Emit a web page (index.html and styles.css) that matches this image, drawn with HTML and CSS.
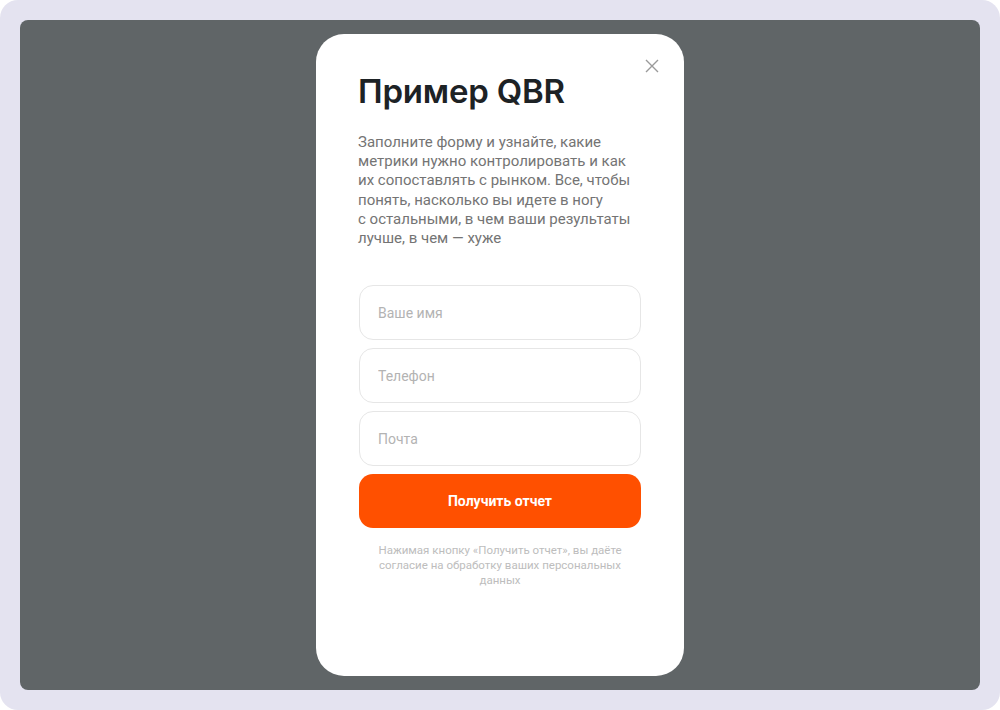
FILE: index.html
```html
<!DOCTYPE html>
<html lang="ru">
<head>
<meta charset="utf-8">
<link rel="stylesheet" href="styles.css">
</head>
<body>
<div class="frame">
  <div class="overlay">
    <div class="modal">
      <button class="close" aria-label="Закрыть">
        <svg width="14" height="14" viewBox="0 0 14 14"><path d="M1 1L13 13M13 1L1 13" stroke="#9a9a9a" stroke-width="1.4" fill="none"/></svg>
      </button>
      <h1 class="title">Пример QBR</h1>
      <p class="lead">Заполните форму и узнайте, какие метрики нужно контролировать и как их сопоставлять с рынком. Все, чтобы понять, насколько вы идете в ногу<br>с остальными, в чем ваши результаты лучше, в чем — хуже</p>
      <form class="form">
        <input class="field" type="text" placeholder="Ваше имя">
        <input class="field" type="tel" placeholder="Телефон">
        <input class="field" type="email" placeholder="Почта">
        <button class="submit" type="button">Получить отчет</button>
      </form>
      <p class="note">Нажимая кнопку «Получить отчет», вы даёте согласие на обработку ваших персональных данных</p>
    </div>
  </div>
</div>
</body>
</html>
```
FILE: styles.css
```css
* { box-sizing: border-box; }
html, body { margin: 0; padding: 0; background: #ffffff; }
body { font-family: Roboto, "Liberation Sans", sans-serif; }
.frame {
  width: 1000px;
  height: 710px;
  background: #e4e3f0;
  border-radius: 18px;
  padding: 20px;
}
.overlay {
  height: 670px;
  background: #606567;
  border-radius: 8px;
  display: flex;
  justify-content: center;
  padding-top: 14px;
}
.modal {
  position: relative;
  width: 368px;
  height: 642px;
  background: #fff;
  border-radius: 28px;
  padding: 37px 42px 0 42px;
}
.close {
  position: absolute;
  top: 22px;
  right: 22px;
  width: 20px;
  height: 20px;
  padding: 0;
  border: 0;
  background: none;
  display: flex;
  align-items: center;
  justify-content: center;
}
.title {
  margin: 0;
  font-family: Inter, "Noto Sans", sans-serif;
  font-weight: 600;
  font-size: 33px;
  line-height: 40px;
  letter-spacing: -0.2px;
  color: #1d2225;
}
.lead {
  margin: 22px 0 0 0;
  width: 276px;
  font-size: 15px;
  line-height: 19.2px;
  color: #747474;
}
.form {
  margin-top: 37px;
  display: flex;
  flex-direction: column;
  gap: 8px;
  width: 284px;
}
.field {
  height: 55px;
  margin: 0 1px;
  border: 1px solid #e6e6e6;
  border-radius: 14px;
  padding: 0 18px;
  font-family: Roboto, "Liberation Sans", sans-serif;
  font-size: 14px;
  color: #333;
  outline: none;
}
.field::placeholder { color: #b3b3b3; }
.submit {
  height: 54px;
  margin: 0 1px;
  border: 0;
  border-radius: 14px;
  background: #ff5000;
  color: #fff;
  font-family: Roboto, "Liberation Sans", sans-serif;
  font-weight: 700;
  font-size: 14px;
}
.note {
  margin: 15px 0 0 0;
  width: 284px;
  padding: 0 12px;
  text-align: center;
  font-size: 11.5px;
  line-height: 15px;
  color: #bdbdbd;
}
```
